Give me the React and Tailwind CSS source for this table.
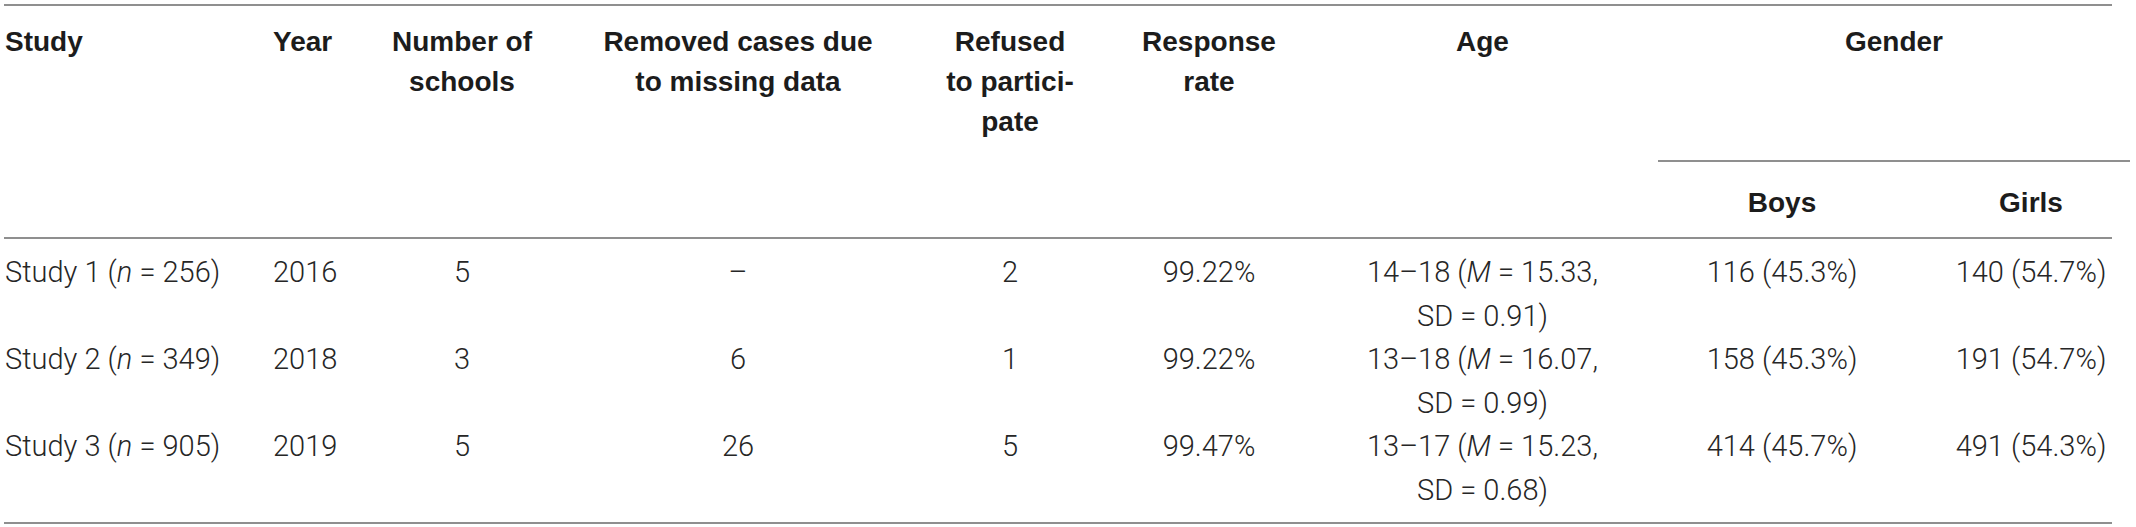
const cols = 'grid grid-cols-[269px_100px_178px_374px_170px_228px_335px_248px_206px]';

const rows = [
  {
    study: '1',
    n: '256',
    year: '2016',
    schools: '5',
    removed: '–',
    refused: '2',
    rate: '99.22%',
    range: '14–18',
    mean: '15.33',
    sd: '0.91',
    boys: '116 (45.3%)',
    girls: '140 (54.7%)',
  },
  {
    study: '2',
    n: '349',
    year: '2018',
    schools: '3',
    removed: '6',
    refused: '1',
    rate: '99.22%',
    range: '13–18',
    mean: '16.07',
    sd: '0.99',
    boys: '158 (45.3%)',
    girls: '191 (54.7%)',
  },
  {
    study: '3',
    n: '905',
    year: '2019',
    schools: '5',
    removed: '26',
    refused: '5',
    rate: '99.47%',
    range: '13–17',
    mean: '15.23',
    sd: '0.68',
    boys: '414 (45.7%)',
    girls: '491 (54.3%)',
  },
];

function HeaderCell({ children, className = '' }) {
  return <div className={`row-span-2 pt-[16px] leading-[40px] ${className}`}>{children}</div>;
}

export default function App() {
  return (
    <div className="w-[2136px] h-[527px] bg-white pl-[4px] pt-[4px] font-['Liberation_Sans',Arial,sans-serif] text-[28px]">
      <div className="w-[2108px] border-t-2 border-b-2 border-[#8f8f8f]">
        {/* header */}
        <div className={`${cols} grid-rows-[156px_75px] border-b-2 border-[#8f8f8f] font-bold text-[#1c1c1c]`}>
          <HeaderCell className="pl-[1px]">Study</HeaderCell>
          <HeaderCell>Year</HeaderCell>
          <HeaderCell className="text-center">
            Number of
            <br />
            schools
          </HeaderCell>
          <HeaderCell className="text-center">
            Removed cases due
            <br />
            to missing data
          </HeaderCell>
          <HeaderCell className="text-center">
            Refused
            <br />
            to partici-
            <br />
            pate
          </HeaderCell>
          <HeaderCell className="text-center">
            Response
            <br />
            rate
          </HeaderCell>
          <HeaderCell className="text-center pr-[16px]">Age</HeaderCell>
          <div className="col-span-2 mr-[-18px] pt-[16px] leading-[40px] text-center border-b-2 border-[#8f8f8f]">
            Gender
          </div>
          <div className="pt-[21px] leading-[40px] text-center">Boys</div>
          <div className="pt-[21px] leading-[40px] text-center pl-[44px]">Girls</div>
        </div>

        {/* body */}
        <div className="pt-[12px] pb-[10px] font-['Roboto','Liberation_Sans',sans-serif] font-light text-[29px] text-[#262626] leading-[43.5px]">
          {rows.map((r) => (
            <div key={r.study} className={`${cols} h-[87px]`}>
              <div className="pl-[1px] whitespace-nowrap">
                Study {r.study} (<i>n</i> = {r.n})
              </div>
              <div>{r.year}</div>
              <div className="text-center">{r.schools}</div>
              <div className="text-center">{r.removed}</div>
              <div className="text-center">{r.refused}</div>
              <div className="text-center">{r.rate}</div>
              <div className="text-center pr-[16px] whitespace-nowrap">
                {r.range} (<i>M</i> = {r.mean},
                <br />
                SD = {r.sd})
              </div>
              <div className="text-center whitespace-nowrap">{r.boys}</div>
              <div className="text-center pl-[44px] whitespace-nowrap">{r.girls}</div>
            </div>
          ))}
        </div>
      </div>
    </div>
  );
}
